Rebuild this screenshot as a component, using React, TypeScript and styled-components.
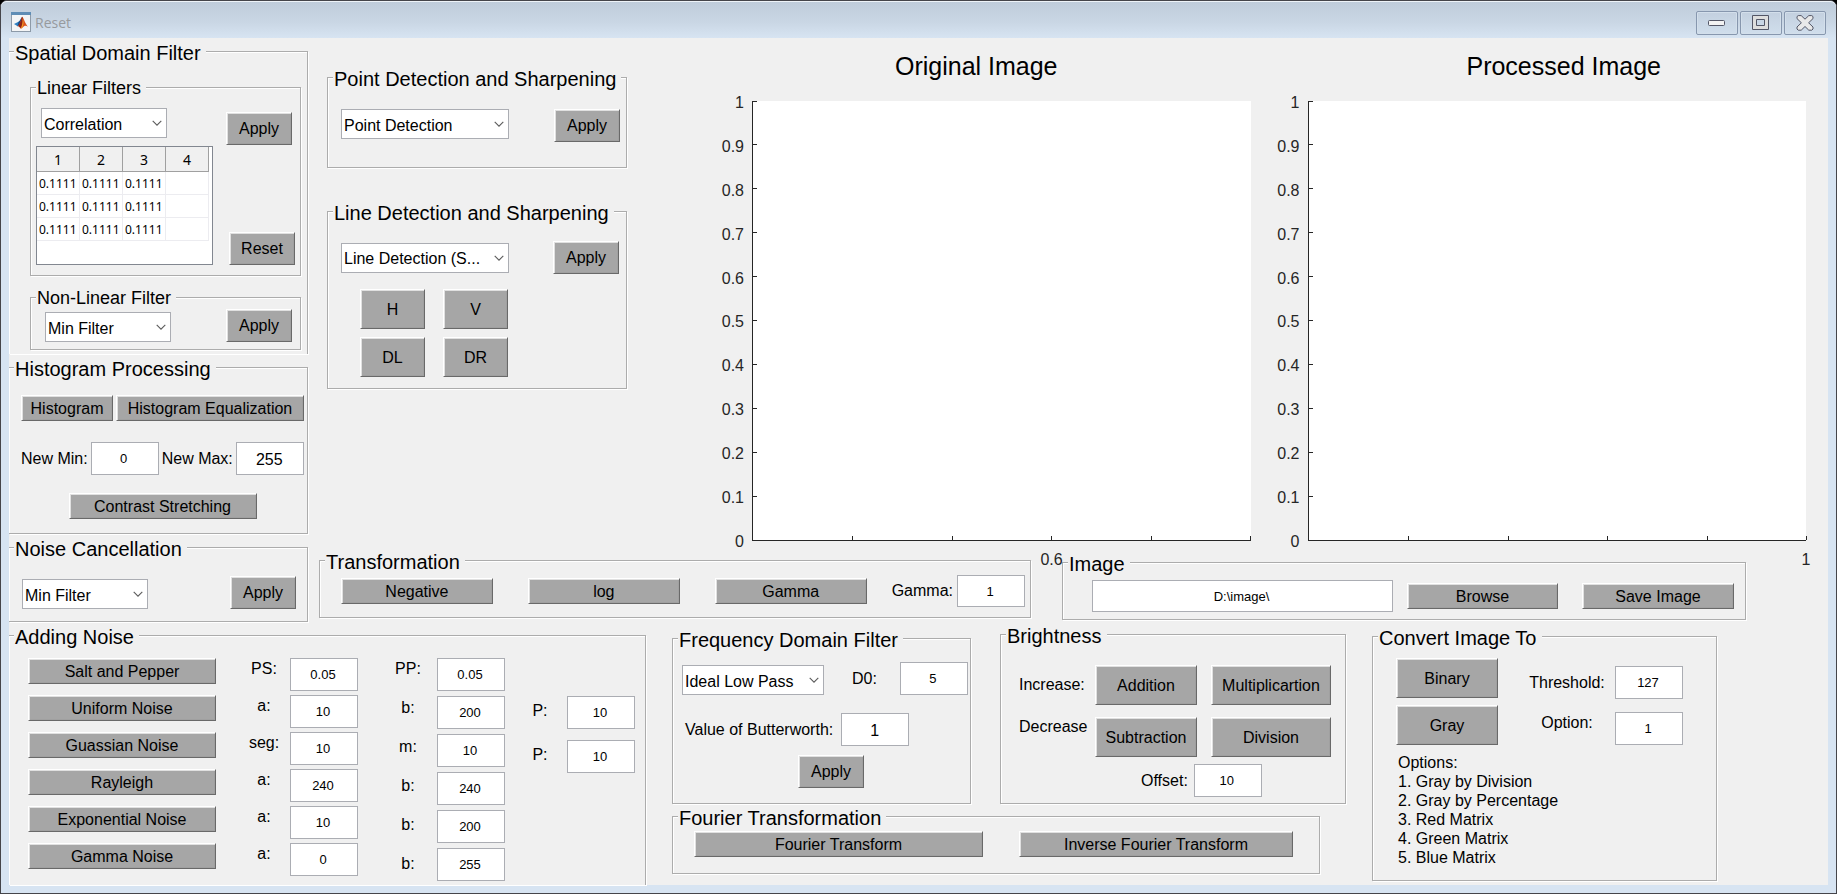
import React, { ReactNode } from 'react';
import styled, { createGlobalStyle, css } from 'styled-components';

const FACE = '#f0f0f0';
const LINE = '#acacac';
const FRAME = '#d7e4f2';

const GlobalStyle = createGlobalStyle`
  *, *::before, *::after { box-sizing: border-box; }
  body {
    margin: 0;
    background: #000;
    color: #000;
    font: 16px/20px "Liberation Sans", Arial, sans-serif;
  }
  button, input, select, textarea { font: inherit; color: inherit; margin: 0; }
`;

/* ---------- window chrome ---------- */

const Window = styled.div`
  display: flex;
  flex-direction: column;
  min-height: 100vh;
  padding: 0 8px 8px;
  background: ${FRAME};
  border: 1px solid #45454a;
  border-radius: 7px 7px 0 0;
`;

const TitleBar = styled.header`
  display: flex;
  align-items: center;
  gap: 4px;
  height: 37px;
  margin: 0 -8px;
  padding: 8px 1px 0 10px;
  border-top: 1px solid #eef3f8;
  border-radius: 6px 6px 0 0;
  background: linear-gradient(#bfccda, #c9d6e4 55%, ${FRAME});
`;

const TitleText = styled.h1`
  flex: 1;
  margin: 0;
  padding-bottom: 2px;
  font: 14px/20px "Open Sans", "Noto Sans", sans-serif;
  color: #979a9e;
`;

const AppIcon = styled.svg`
  width: 20px;
  height: 20px;
  margin-bottom: 4px;
`;

const WindowButtons = styled.div`
  display: flex;
  gap: 2px;
  padding-right: 9px;
  margin-bottom: 3px;
`;

const WindowButton = styled.button`
  display: flex;
  align-items: center;
  justify-content: center;
  width: 42px;
  height: 24px;
  padding: 0;
  border: 1px solid #8797ae;
  border-radius: 2px;
  background: linear-gradient(#c3d0df, #d0deec);
  box-shadow: inset 0 0 0 1px #d3dfeb;
`;

const Client = styled.main`
  flex: 1;
  display: flex;
  flex-direction: column;
  background: ${FACE};
`;

/* ---------- controls ---------- */

const GroupBox = styled.fieldset<{ $flush?: boolean; $open?: boolean; $basis?: number }>`
  min-width: 0;
  margin: 0;
  padding: 0;
  border: 1px solid ${LINE};
  box-shadow: 1px 1px 0 #fff, inset 1px 1px 0 #fff;
  ${p => p.$flush && css`border-left: 0;`}
  ${p => p.$open && css`border-bottom: 0;`}
  ${p => p.$basis && css`flex: ${p.$basis} 1 ${p.$basis}px;`}
`;

const GroupTitle = styled.legend<{ $small?: boolean }>`
  margin-left: 5px;
  padding: ${p => (p.$small ? '2px 5px 0 1px' : '4px 5px 0 1px')};
  background: ${FACE};
  font-size: ${p => (p.$small ? 18 : 20)}px;
  line-height: ${p => (p.$small ? 19 : 21)}px;
  white-space: nowrap;
`;

const Body = styled.div<{ $pad: string; $gap?: number }>`
  display: flex;
  flex-direction: column;
  gap: ${p => p.$gap ?? 0}px;
  padding: ${p => p.$pad};
`;

type GroupProps = {
  title: string;
  pad: string;
  gap?: number;
  small?: boolean;
  flush?: boolean;
  open?: boolean;
  basis?: number;
  className?: string;
  children: ReactNode;
};

const Group = ({ title, pad, gap, small, flush, open, basis, className, children }: GroupProps) => (
  <GroupBox className={className} $flush={flush} $open={open} $basis={basis}>
    <GroupTitle $small={small}>{title}</GroupTitle>
    <Body $pad={pad} $gap={gap}>{children}</Body>
  </GroupBox>
);

const Row = styled.div<{ $gap?: number; $align?: string; $indent?: number; $grow?: boolean }>`
  display: flex;
  flex: ${p => (p.$grow ? '1 1 0' : 'none')};
  align-items: ${p => p.$align ?? 'center'};
  gap: ${p => p.$gap ?? 0}px;
  padding-left: ${p => p.$indent ?? 0}px;
`;

const Column = styled.div<{ $gap: number; $width: number; $left?: number; $top?: number }>`
  display: flex;
  flex-direction: column;
  flex: none;
  align-items: center;
  gap: ${p => p.$gap}px;
  width: ${p => p.$width}px;
  margin-left: ${p => p.$left ?? 0}px;
  padding-top: ${p => p.$top ?? 0}px;
`;

const HEIGHTS = { slim: 26, normal: 33, tall: 40 };

const Button = styled.button<{ $w?: number; $size?: keyof typeof HEIGHTS; $grow?: number }>`
  flex: ${p => (p.$grow ? `${p.$grow} 1 0` : 'none')};
  width: ${p => (p.$w ? `${p.$w}px` : 'auto')};
  height: ${p => HEIGHTS[p.$size ?? 'normal']}px;
  padding: 1px 0 0;
  border: 1px solid;
  border-color: #fff #696969 #696969 #fff;
  background: #a6a6a6;
  box-shadow: inset 1px 1px 0 #e0e0e0, inset -1px -1px 0 #a0a0a0;
  line-height: 20px;
  white-space: nowrap;
`;

const TextBox = styled.input<{ $large?: boolean; $short?: boolean; $grow?: boolean }>`
  flex: ${p => (p.$grow ? '1 1 0' : 'none')};
  min-width: 0;
  width: 68px;
  height: ${p => (p.$short ? 32 : 33)}px;
  padding: ${p => (p.$large ? '2px 3px 0 2px' : '0 4px 0 2px')};
  border: 1px solid #abadb3;
  background: #fff;
  font-size: ${p => (p.$large ? 16 : 13)}px;
  text-align: center;
`;

const Label = styled.label<{ $raised?: boolean }>`
  line-height: 20px;
  white-space: nowrap;
  ${p => p.$raised && css`align-self: start;`}
`;

const SelectWrap = styled.span<{ $w: number }>`
  position: relative;
  flex: none;
  display: block;
  width: ${p => p.$w}px;
  height: 30px;
  svg {
    position: absolute;
    right: 5px;
    top: 12px;
    pointer-events: none;
  }
`;

const SelectBox = styled.select`
  appearance: none;
  display: block;
  width: 100%;
  height: 100%;
  padding: 3px 0 0 2px;
  border: 1px solid #abadb3;
  border-radius: 0;
  background: #fff;
`;

const DropDown = ({ w, name, value }: { w: number; name: string; value: string }) => (
  <SelectWrap $w={w}>
    <SelectBox aria-label={name} defaultValue={value}>
      <option value={value}>{value}</option>
    </SelectBox>
    <svg width="10" height="7" viewBox="0 0 10 7" fill="none" stroke="#5c5c5c" strokeWidth="1.1">
      <path d="M0.7 0.9 5 5.2 9.3 0.9" />
    </svg>
  </SelectWrap>
);

/* ---------- kernel table ---------- */

const TableFrame = styled.div`
  width: 177px;
  height: 119px;
  border: 1px solid #828790;
  background: #fff;
`;

const Kernel = styled.table`
  border-collapse: separate;
  border-spacing: 0;
  table-layout: fixed;
  width: 172px;
  font-family: "Noto Sans", sans-serif;
  font-size: 12px;
  th {
    height: 25px;
    padding: 2px 0 0;
    border-right: 1px solid #a0a0a0;
    border-bottom: 1px solid #a0a0a0;
    background: ${FACE};
    font-weight: 400;
    font-size: 14px;
    line-height: 20px;
  }
  td {
    height: 23px;
    padding: 1px 0 0 2px;
    border-right: 1px solid #ececf0;
    border-bottom: 1px solid #ececf0;
    line-height: 20px;
  }
`;

/* ---------- axes ---------- */

const AxesPanel = styled.div`
  flex: 1;
  display: flex;
  flex-direction: column;
  gap: 20px;
  padding-top: 13px;
  margin-left: 85px;
`;

const AxesTitles = styled.div`
  display: grid;
  grid-template-columns: 1fr 1fr;
  gap: 59px;
`;

const AxesTitle = styled.h2`
  margin: 0;
  font-weight: 400;
  font-size: 25px;
  line-height: 30px;
  text-align: center;
`;

const AxesRow = styled.div`
  flex: 1;
  display: flex;
  gap: 17px;
  padding-right: 22px;
`;

const Axes = styled.div`
  flex: 1;
  display: flex;
  gap: 8px;
  color: #262626;
`;

const YLabels = styled.div`
  display: flex;
  flex-direction: column;
  justify-content: space-between;
  width: 32px;
  margin: -8px 0 -11px;
  text-align: right;
`;

const Plot = styled.div`
  position: relative;
  flex: 1;
  background: #fff;
  border-left: 1px solid #262626;
  border-bottom: 1px solid #262626;
  svg {
    position: absolute;
    inset: 0;
    width: 100%;
    height: 100%;
    overflow: visible;
  }
`;

const XLabel = styled.span<{ $at: number }>`
  position: absolute;
  top: calc(100% + 10px);
  left: ${p => p.$at}%;
  width: 40px;
  margin-left: -20px;
  text-align: center;
`;

const yTicks = ['1', '0.9', '0.8', '0.7', '0.6', '0.5', '0.4', '0.3', '0.2', '0.1', '0'];

const Chart = ({ label, at }: { label: string; at: number }) => (
  <Axes>
    <YLabels>{yTicks.map(t => <span key={t}>{t}</span>)}</YLabels>
    <Plot>
      <svg stroke="#262626" shapeRendering="crispEdges">
        {yTicks.slice(0, 10).map((t, i) => (
          <line key={t} x1="0" x2="4" y1={`${i * 10}%`} y2={`${i * 10}%`} />
        ))}
        {[20, 40, 60, 80, 100].map(x => (
          <line key={x} x1={`${x}%`} x2={`${x}%`} y1="99%" y2="100%" />
        ))}
      </svg>
      <XLabel $at={at}>{label}</XLabel>
    </Plot>
  </Axes>
);

/* ---------- page regions ---------- */

const Upper = styled.div`
  flex: 1;
  display: flex;
`;

const Sidebar = styled.div`
  flex: none;
  display: flex;
  flex-direction: column;
  gap: 1px;
  width: 299px;
  padding-top: 1px;
`;

const Work = styled.div`
  flex: 1;
  display: flex;
  flex-direction: column;
  gap: 7px;
`;

const WorkTop = styled.div`
  flex: 1;
  display: flex;
  padding-left: 19px;
`;

const Detection = styled.div`
  flex: none;
  display: flex;
  flex-direction: column;
  gap: 31px;
  width: 300px;
  padding-top: 27px;
`;

const Strip = styled.div`
  display: flex;
  align-items: flex-start;
  gap: 31px;
  padding: 0 82px 2px 11px;
`;

const ImageGroup = styled(Group)`
  margin-top: 2px;
`;

const LinearSide = styled.div`
  display: flex;
  flex-direction: column;
  justify-content: space-between;
  width: 69px;
  padding-top: 4px;
  > :last-child { align-self: flex-end; }
`;

const SelectIndent = styled.div`
  padding: 0 0 8px 5px;
`;

const Directions = styled.div`
  display: grid;
  grid-template-columns: 65px 65px;
  gap: 8px 18px;
  padding-left: 19px;
`;

const CenterRow = styled.div`
  display: flex;
  justify-content: center;
`;

const Lower = styled.div`
  flex: none;
  display: flex;
  gap: 26px;
  min-height: 263px;
  padding-right: 111px;
`;

const NoiseGroup = styled(Group)`
  margin-top: 1px;
`;

const Middle = styled.div`
  flex: 674 1 674px;
`;

const MiddleTop = styled.div`
  display: flex;
  align-items: flex-end;
  gap: 29px;
`;

const FourierGroup = styled(Group)`
  margin-right: 26px;
`;

const ConvertGroup = styled(Group)`
  align-self: flex-start;
  margin-top: 2px;
`;

const BrightnessGrid = styled.div`
  display: grid;
  grid-template-columns: 62px 102px 120px;
  gap: 12px 14px;
  align-items: center;
`;

const OptionList = styled.div`
  padding: 1px 0 0 2px;
  line-height: 19px;
  p, ol { margin: 0; padding: 0; list-style: none; }
`;

const noises = ['Salt and Pepper', 'Uniform Noise', 'Guassian Noise', 'Rayleigh', 'Exponential Noise', 'Gamma Noise'];

type Field = [id: string, label: string, value: string];

const firstFields: Field[] = [
  ['sp-ps', 'PS:', '0.05'], ['un-a', 'a:', '10'], ['ga-seg', 'seg:', '10'],
  ['ra-a', 'a:', '240'], ['ex-a', 'a:', '10'], ['gm-a', 'a:', '0'],
];
const secondFields: Field[] = [
  ['sp-pp', 'PP:', '0.05'], ['un-b', 'b:', '200'], ['ga-m', 'm:', '10'],
  ['ra-b', 'b:', '240'], ['ex-b', 'b:', '200'], ['gm-b', 'b:', '255'],
];
const thirdFields: Field[] = [['un-p', 'P:', '10'], ['ga-p', 'P:', '10']];
const convertFields: Field[] = [['threshold', 'Threshold:', '127'], ['option', 'Option:', '1']];

const Labels = ({ of }: { of: Field[] }) => <>{of.map(f => <Label key={f[0]} htmlFor={f[0]}>{f[1]}</Label>)}</>;
const Boxes = ({ of }: { of: Field[] }) => <>{of.map(f => <TextBox key={f[0]} id={f[0]} defaultValue={f[2]} />)}</>;

export default function App() {
  return (
    <>
      <GlobalStyle />
      <Window>
        <TitleBar>
          <AppIcon viewBox="0 0 20 20">
            <rect x="0.5" y="0.5" width="19" height="19" fill="#f4f5f6" stroke="#8d9aa8" />
            <rect x="0" y="0" width="20" height="3" fill="#5f8db5" />
            <path d="M3 12 7.5 9.7 9.5 11.6 6.6 14.2Z" fill="#2f7fc1" />
            <path d="M7.5 9.7C9.3 8.8 9.8 6 11.3 4.8L9.5 11.6 6.6 14.2Z" fill="#174a86" />
            <path d="M11.3 4.8C12.8 6.5 14.2 11.6 17 14.8 14.8 13.2 13.4 13.4 11.8 15.3 10.4 17 9.8 17 9.3 16.3 8.8 14.6 7.8 14 6.6 14.2 9.6 12.8 9.9 6.6 11.3 4.8Z" fill="#d9541e" />
            <path d="M11.3 4.8C12 8.5 12 12 9.3 16.3 8.8 14.6 7.8 14 6.6 14.2 9.6 12.8 9.9 6.6 11.3 4.8Z" fill="#8c2216" />
            <path d="M11.5 6.5C12.7 9 13 12 11.2 15.8L9.9 16.7C11.6 13 12 10 11.5 6.5Z" fill="#f5a623" />
          </AppIcon>
          <TitleText>Reset</TitleText>
          <WindowButtons>
            <WindowButton aria-label="Minimize">
              <svg width="18" height="8" viewBox="0 0 18 8">
                <rect x="0.5" y="1.5" width="16" height="5" rx="1" fill="#f2f2f2" stroke="#535666" />
              </svg>
            </WindowButton>
            <WindowButton aria-label="Maximize">
              <svg width="18" height="16" viewBox="0 0 18 16">
                <path fillRule="evenodd" d="M0.5 0.5H16.5V14.5H0.5ZM4.5 4.5V10.5H12.5V4.5Z" fill="#dedede" stroke="#535666" />
              </svg>
            </WindowButton>
            <WindowButton aria-label="Close">
              <svg width="18" height="16" viewBox="0 0 18 16">
                <path
                  d="M1 1.6 2.2 0.6H5.2L9 4.2 12.8 0.6H15.8L17 1.6V3.6L12.6 7.8 17 12V14L15.8 15.2H12.8L9 11.5 5.2 15.2H2.2L1 14V12L5.4 7.8 1 3.6Z"
                  fill="#e9e9e9"
                  stroke="#535666"
                />
              </svg>
            </WindowButton>
          </WindowButtons>
        </TitleBar>

        <Client>
          <Upper>
            <Sidebar>
              <Group title="Spatial Domain Filter" flush open pad="13px 6px 4px 21px" gap={11}>
                <Group title="Linear Filters" small pad="10px 0 10px 5px">
                  <Row $gap={13} $align="stretch">
                    <div>
                      <SelectIndent>
                        <DropDown w={126} name="Linear filter" value="Correlation" />
                      </SelectIndent>
                      <TableFrame>
                        <Kernel>
                          <thead>
                            <tr>{[1, 2, 3, 4].map(n => <th key={n}>{n}</th>)}</tr>
                          </thead>
                          <tbody>
                            {[1, 2, 3].map(r => (
                              <tr key={r}>
                                <td>0.1111</td>
                                <td>0.1111</td>
                                <td>0.1111</td>
                                <td />
                              </tr>
                            ))}
                          </tbody>
                        </Kernel>
                      </TableFrame>
                    </div>
                    <LinearSide>
                      <Button $w={66}>Apply</Button>
                      <Button $w={66}>Reset</Button>
                    </LinearSide>
                  </Row>
                </Group>
                <Group title="Non-Linear Filter" small pad="1px 0 7px 14px">
                  <Row $gap={55} $align="flex-end">
                    <DropDown w={126} name="Non-linear filter" value="Min Filter" />
                    <Button $w={66}>Apply</Button>
                  </Row>
                </Group>
              </Group>

              <Group title="Histogram Processing" flush pad="15px 3px 14px 12px">
                <Row $gap={3}>
                  <Button $w={92} $size="slim">Histogram</Button>
                  <Button $w={188} $size="slim">Histogram Equalization</Button>
                </Row>
                <Body $pad="21px 0 18px">
                  <Row $gap={3}>
                    <Label htmlFor="new-min">New Min:</Label>
                    <TextBox id="new-min" defaultValue="0" />
                    <Label htmlFor="new-max">New Max:</Label>
                    <TextBox id="new-max" $large defaultValue="255" />
                  </Row>
                </Body>
                <CenterRow>
                  <Button $w={188} $size="slim">Contrast Stretching</Button>
                </CenterRow>
              </Group>

              <Group title="Noise Cancellation" flush pad="16px 0 12px 13px">
                <Row $gap={82} $align="flex-end">
                  <DropDown w={126} name="Noise cancellation filter" value="Min Filter" />
                  <Button $w={66}>Apply</Button>
                </Row>
              </Group>
            </Sidebar>

            <Work>
              <WorkTop>
                <Detection>
                  <Group title="Point Detection and Sharpening" pad="19px 0 25px 13px">
                    <Row $gap={45} $align="flex-start">
                      <DropDown w={168} name="Point detection" value="Point Detection" />
                      <Button $w={66}>Apply</Button>
                    </Row>
                  </Group>
                  <Group title="Line Detection and Sharpening" pad="17px 0 11px 13px" gap={15}>
                    <Row $gap={44}>
                      <DropDown w={168} name="Line detection" value="Line Detection (S..." />
                      <Button $w={66}>Apply</Button>
                    </Row>
                    <Directions>
                      {['H', 'V', 'DL', 'DR'].map(d => <Button key={d} $size="tall">{d}</Button>)}
                    </Directions>
                  </Group>
                </Detection>
                <AxesPanel>
                  <AxesTitles>
                    <AxesTitle>Original Image</AxesTitle>
                    <AxesTitle>Processed Image</AxesTitle>
                  </AxesTitles>
                  <AxesRow>
                    <Chart label="0.6" at={60} />
                    <Chart label="1" at={100} />
                  </AxesRow>
                </AxesPanel>
              </WorkTop>

              <Strip>
                <Group title="Transformation" basis={712} pad="2px 5px 10px 21px">
                  <Row $gap={25}>
                    <Row $gap={35} $grow>
                      <Button $grow={1} $size="slim">Negative</Button>
                      <Button $grow={1} $size="slim">log</Button>
                      <Button $grow={1} $size="slim">Gamma</Button>
                    </Row>
                    <Row $gap={4}>
                      <Label htmlFor="gamma">Gamma:</Label>
                      <TextBox id="gamma" $short defaultValue="1" />
                    </Row>
                  </Row>
                </Group>
                <ImageGroup title="Image" basis={684} pad="5px 11px 7px 29px">
                  <Row $gap={24}>
                    <Row $gap={14} $grow>
                      <TextBox $grow $short aria-label="Image path" defaultValue="D:\image\" />
                      <Button $w={151} $size="slim">Browse</Button>
                    </Row>
                    <Button $w={152} $size="slim">Save Image</Button>
                  </Row>
                </ImageGroup>
              </Strip>
            </Work>
          </Upper>

          <Lower>
            <NoiseGroup title="Adding Noise" flush open basis={637} pad="10px 0 4px 19px">
              <Row $align="flex-start">
                <Column $gap={11} $width={188}>
                  {noises.map(n => <Button key={n} $w={188} $size="slim">{n}</Button>)}
                </Column>
                <Column $gap={17} $width={40} $left={28} $top={1}><Labels of={firstFields} /></Column>
                <Column $gap={4} $width={68} $left={6}><Boxes of={firstFields} /></Column>
                <Column $gap={19} $width={40} $left={30} $top={1}><Labels of={secondFields} /></Column>
                <Column $gap={5} $width={68} $left={9}><Boxes of={secondFields} /></Column>
                <Column $gap={24} $width={30} $left={20} $top={43}><Labels of={thirdFields} /></Column>
                <Column $gap={11} $width={68} $left={12} $top={38}><Boxes of={thirdFields} /></Column>
              </Row>
            </NoiseGroup>

            <Middle>
              <MiddleTop>
                <Group title="Frequency Domain Filter" basis={299} pad="11px 2px 15px 9px">
                  <Row $align="flex-end" $gap={28}>
                    <DropDown w={142} name="Frequency filter" value="Ideal Low Pass" />
                    <Row $gap={23}>
                      <Label htmlFor="d0">D0:</Label>
                      <TextBox id="d0" defaultValue="5" />
                    </Row>
                  </Row>
                  <Body $pad="18px 0 9px 3px">
                    <Row $gap={8}>
                      <Label htmlFor="butterworth">Value of Butterworth:</Label>
                      <TextBox id="butterworth" $large defaultValue="1" />
                    </Row>
                  </Body>
                  <Row $indent={116}>
                    <Button $w={66}>Apply</Button>
                  </Row>
                </Group>
                <Group title="Brightness" basis={346} pad="18px 0 6px 18px" gap={7}>
                  <BrightnessGrid>
                    <Label as="span">Increase:</Label>
                    <Button $size="tall">Addition</Button>
                    <Button $size="tall">Multiplicartion</Button>
                    <Label as="span" $raised>Decrease</Label>
                    <Button $size="tall">Subtraction</Button>
                    <Button $size="tall">Division</Button>
                  </BrightnessGrid>
                  <Row $gap={6} $indent={122}>
                    <Label htmlFor="offset">Offset:</Label>
                    <TextBox id="offset" defaultValue="10" />
                  </Row>
                </Group>
              </MiddleTop>
              <FourierGroup title="Fourier Transformation" pad="2px 26px 16px 21px">
                <Row $gap={36}>
                  <Button $grow={289} $size="slim">Fourier Transform</Button>
                  <Button $grow={274} $size="slim">Inverse Fourier Transform</Button>
                </Row>
              </FourierGroup>
            </Middle>

            <ConvertGroup title="Convert Image To" basis={345} pad="9px 0 13px 23px" gap={7}>
              <Row $align="flex-start">
                <Column $gap={7} $width={102}>
                  <Button $w={102} $size="tall">Binary</Button>
                  <Button $w={102} $size="tall">Gray</Button>
                </Column>
                <Column $gap={20} $width={76} $left={31} $top={15}><Labels of={convertFields} /></Column>
                <Column $gap={13} $width={68} $left={10} $top={8}><Boxes of={convertFields} /></Column>
              </Row>
              <OptionList>
                <p>Options:</p>
                <ol>
                  <li>1. Gray by Division</li>
                  <li>2. Gray by Percentage</li>
                  <li>3. Red Matrix</li>
                  <li>4. Green Matrix</li>
                  <li>5. Blue Matrix</li>
                </ol>
              </OptionList>
            </ConvertGroup>
          </Lower>
        </Client>
      </Window>
    </>
  );
}
